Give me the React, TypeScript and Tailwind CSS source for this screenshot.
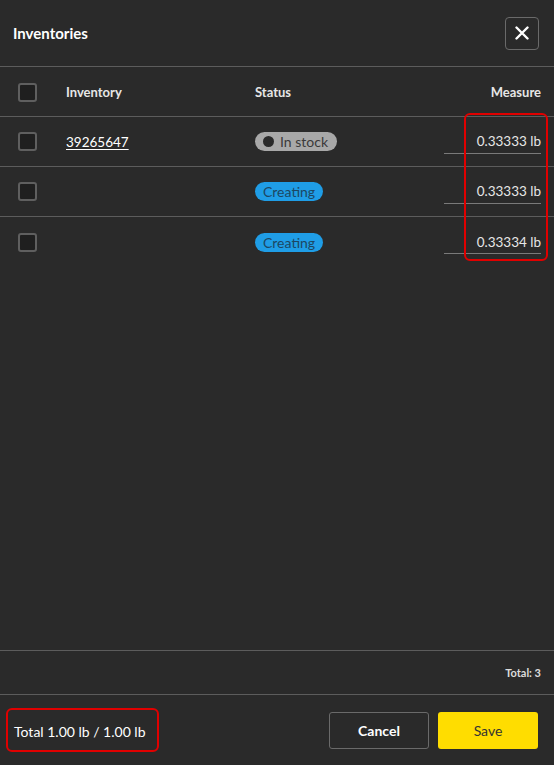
import React from 'react';

const rows = [
  { id: 1, number: '39265647', status: 'IN_STOCK', measure: '0.33333 lb' },
  { id: 2, number: '', status: 'CREATING', measure: '0.33333 lb' },
  { id: 3, number: '', status: 'CREATING', measure: '0.33334 lb' },
];

export default function App() {
  return (
    <div
      className="relative flex h-[765px] w-[554px] flex-col bg-[#2a2a2a] text-[#e6e6e6]"
      style={{ fontFamily: 'Lato, "Open Sans", sans-serif' }}
    >
      {/* Header */}
      <div className="flex h-[67px] items-center justify-between border-b border-[#5c5c5c] pl-[13px] pr-[15px]">
        <h1 className="text-[15px] font-bold text-white">Inventories</h1>
        <button className="flex h-[33px] w-[34px] items-center justify-center rounded-[4px] border border-[#6a6a6a]">
          <svg width="14" height="14" viewBox="0 0 14 14">
            <path d="M1.5 1.5 L12.5 12.5 M12.5 1.5 L1.5 12.5" stroke="#ffffff" strokeWidth="2.4" strokeLinecap="round" />
          </svg>
        </button>
      </div>

      {/* Table header */}
      <div className="flex h-[50px] items-center border-b border-[#5c5c5c] pl-[18px] pr-[13px] pt-[2px] text-[13px] font-bold">
        <Checkbox />
        <span className="ml-[29px] w-[189px]">Inventory</span>
        <span className="flex-1">Status</span>
        <span>Measure</span>
      </div>

      {rows.map((row, i) => (
        <div
          key={row.id}
          className={`flex h-[50px] items-center pl-[18px] pr-[13px] text-[13px] ${
            i < rows.length - 1 ? 'border-b border-[#5c5c5c]' : ''
          }`}
        >
          <Checkbox />
          <span className="ml-[29px] mt-[2px] w-[189px] text-[13.5px] text-white underline underline-offset-2">{row.number}</span>
          <span className="mt-[2px] flex-1">
            <StatusBadge status={row.status} />
          </span>
          <span className="mt-[2px] w-[97px] border-b border-[#7a7a7a] pb-[1px] text-right text-[13.5px] text-[#e6e6e6]">
            {row.measure}
          </span>
        </div>
      ))}

      <div className="flex-1" />

      {/* Count row */}
      <div className="flex h-[45px] items-center justify-end border-y border-[#5c5c5c] pr-[13px] pt-[1px] text-[11px] font-bold text-[#dcdcdc]">
        Total: 3
      </div>

      {/* Footer */}
      <div className="flex h-[70px] items-center justify-between pl-[6px] pr-[16px]">
        <div className="flex h-[44px] w-[153px] items-center rounded-[6px] border-2 border-[#e00000] pl-[6px] pt-[2px] text-[14px] text-white">
          Total 1.00 lb / 1.00 lb
        </div>
        <div className="flex gap-[9px]">
          <button className="h-[37px] w-[100px] rounded-[3px] border border-[#6a6a6a] text-[14px] font-bold text-white">
            Cancel
          </button>
          <button className="h-[37px] w-[100px] rounded-[3px] bg-[#ffdd00] text-[14px] text-[#333333]">
            Save
          </button>
        </div>
      </div>

      {/* annotation around measures */}
      <div className="absolute left-[464px] top-[113px] h-[148px] w-[84px] rounded-[6px] border-2 border-[#e00000]" />
    </div>
  );
}

function Checkbox() {
  return <span className="block h-[19px] w-[19px] shrink-0 rounded-[3px] border-2 border-[#5f5f5f] bg-[#1f1f1f]" />;
}

function StatusBadge({ status }: { status: string }) {
  if (status === 'IN_STOCK') {
    return (
      <span className="inline-flex h-[19px] items-center gap-[6px] rounded-full bg-[#a8a8a8] pl-[8px] pr-[9px] text-[14px] text-[#3a3a3a]">
        <span className="h-[11px] w-[11px] rounded-full bg-[#2a2a2a]" />
        In stock
      </span>
    );
  }
  return (
    <span className="inline-flex h-[19px] items-center rounded-full bg-[#1f9de6] px-[8px] text-[14px] text-[#1c4763]">
      Creating
    </span>
  );
}
